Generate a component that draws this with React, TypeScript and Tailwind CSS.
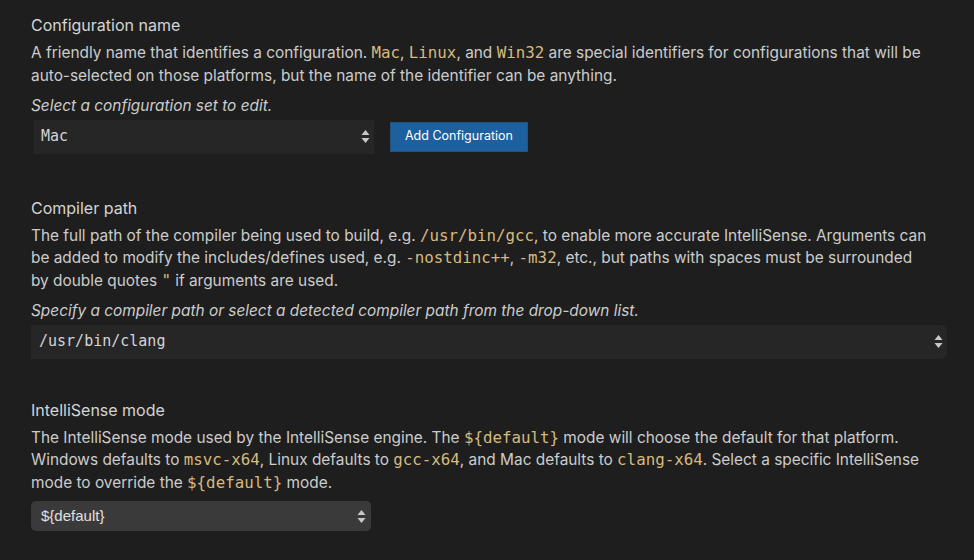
import React from 'react';

const Code: React.FC<{ children: React.ReactNode }> = ({ children }) => (
  <span className="font-['DejaVu_Sans_Mono',monospace] text-[15.8px] text-[#d7ba7d]">{children}</span>
);

const Arrows: React.FC = () => (
  <svg width="9" height="15" viewBox="0 0 9 15" className="shrink-0">
    <path d="M4.5 1 L8.5 6 H0.5 Z" fill="#c8c8c8" />
    <path d="M4.5 14 L8.5 9 H0.5 Z" fill="#c8c8c8" />
  </svg>
);

export default function App() {
  return (
    <div className="min-h-screen w-[974px] h-[560px] overflow-hidden bg-[#1e1e1e] text-[#cccccc] font-['Inter',sans-serif] text-[15.4px] leading-[22.5px] pl-[31px] pr-[42px] pt-[13px]">
      {/* Configuration name */}
      <section>
        <h2 className="text-[16px] text-[#d4d4d4] leading-[24px]">Configuration name</h2>
        <p className="mt-[5px]">
          A friendly name that identifies a configuration. <Code>Mac</Code>, <Code>Linux</Code>, and <Code>Win32</Code> are special identifiers for configurations that will be auto-selected on those platforms, but the name of the identifier can be anything.
        </p>
        <p className="italic mt-[8px]">Select a configuration set to edit.</p>
        <div className="flex items-center gap-[16px] mt-[2px] ml-[3px]">
          <div className="w-[340px] h-[34px] bg-[#262626] flex items-center justify-between pl-[7px] pr-[4px]">
            <span className="font-['DejaVu_Sans_Mono',monospace] text-[15px] text-[#d4d4d4]">Mac</span>
            <Arrows />
          </div>
          <button className="h-[30px] px-[14px] bg-[#1d609f] border border-[#24527f] text-white text-[12.5px]">Add Configuration</button>
        </div>
      </section>

      {/* Compiler path */}
      <section className="mt-[42px]">
        <h2 className="text-[16px] text-[#d4d4d4] leading-[24px]">Compiler path</h2>
        <p className="mt-[5px]">
          The full path of the compiler being used to build, e.g. <Code>/usr/bin/gcc</Code>, to enable more accurate IntelliSense. Arguments can be added to modify the includes/defines used, e.g. <Code>-nostdinc++</Code>, <Code>-m32</Code>, etc., but paths with spaces must be surrounded by double quotes <Code>"</Code> if arguments are used.
        </p>
        <p className="italic mt-[8px]">Specify a compiler path or select a detected compiler path from the drop-down list.</p>
        <div className="mt-[2px] w-[916px] h-[34px] bg-[#262626] rounded-r-[6px] flex items-center justify-between pl-[8px] pr-[4px]">
          <span className="font-['DejaVu_Sans_Mono',monospace] text-[15px] text-[#d4d4d4]">/usr/bin/clang</span>
          <Arrows />
        </div>
      </section>

      {/* IntelliSense mode */}
      <section className="mt-[39px]">
        <h2 className="text-[16px] text-[#d4d4d4] leading-[24px]">IntelliSense mode</h2>
        <p className="mt-[5px]">
          The IntelliSense mode used by the IntelliSense engine. The <Code>{'${default}'}</Code> mode will choose the default for that platform. Windows defaults to <Code>msvc-x64</Code>, Linux defaults to <Code>gcc-x64</Code>, and Mac defaults to <Code>clang-x64</Code>. Select a specific IntelliSense mode to override the <Code>{'${default}'}</Code> mode.
        </p>
        <div className="mt-[7px] w-[340px] h-[30px] bg-[#3a3a3a] rounded-[5px] flex items-center justify-between pl-[10px] pr-[5px]">
          <span className="text-[15px] text-[#e0e0e0] font-['Liberation_Sans',sans-serif]">{'${default}'}</span>
          <Arrows />
        </div>
      </section>
    </div>
  );
}
